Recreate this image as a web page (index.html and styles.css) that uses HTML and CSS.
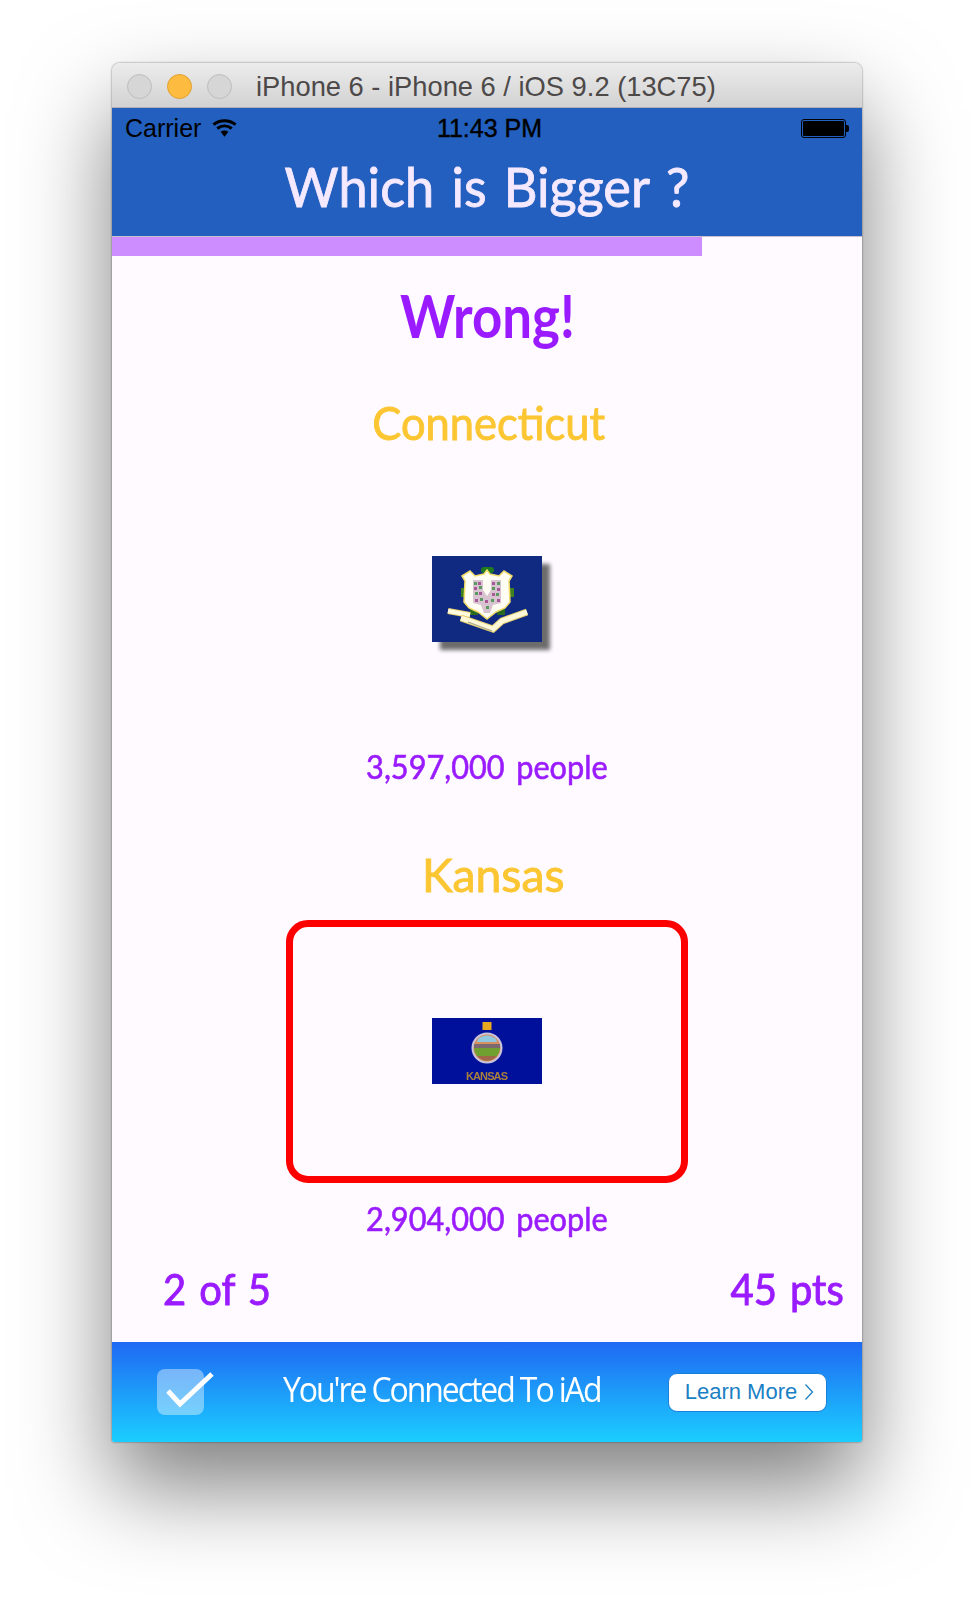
FILE: index.html
```html
<!DOCTYPE html>
<html lang="en">
<head>
<meta charset="utf-8">
<title>Which is Bigger</title>
<link rel="stylesheet" href="styles.css">
</head>
<body>
<div class="window">
  <div class="titlebar">
    <div class="lights"><span class="light"></span><span class="light amber"></span><span class="light"></span></div>
    <div class="wintitle">iPhone 6 - iPhone 6 / iOS 9.2 (13C75)</div>
  </div>
  <header class="appbar">
    <div class="status">
      <div class="status-left">
        <span>Carrier</span>
        <svg class="wifi" viewBox="0 0 26 20"><path d="M1.500 6.500C8 1 18 1 24.500 6.500" fill="none" stroke="#000" stroke-width="3.200"/><path d="M5.500 10.500C10 7 16 7 20.500 10.500" fill="none" stroke="#000" stroke-width="3.200"/><path d="M9 14C11.500 12 14.500 12 17 14L13 19Z" fill="#000"/></svg>
      </div>
      <div class="clock">11:43 PM</div>
      <div class="battery"><span class="cell"></span><span class="nub"></span></div>
    </div>
    <h1 class="apptitle">Which is Bigger ?</h1>
  </header>
  <div class="progress"><div class="progress-fill"></div></div>
  <main class="game">
    <div class="verdict">Wrong!</div>
    <div class="state-name first">Connecticut</div>
    <div class="flag-slot ct">
      <svg class="flag flag-shadow" viewBox="0 0 110 86">
        <rect width="110" height="86" fill="#0f2a80"/>
        <g class="soft">
          <rect x="49" y="11" width="13" height="6" rx="3" fill="#1f7a20"/>
          <rect x="29" y="32" width="5" height="9" fill="#3f8020"/>
          <rect x="77" y="32" width="5" height="9" fill="#3f8020"/>
          <rect x="38" y="53" width="8" height="6" fill="#2a6a20"/>
          <rect x="65" y="53" width="8" height="6" fill="#2a6a20"/>
          <path d="M30 20l8-5 5 5 9-2 3-4 3 4 9 2 5-5 8 5-3 5 1 21-5 6-9 4-9 7-9-7-9-4-5-6 1-21z" fill="#fffef4" stroke="#f2dc6a" stroke-width="1.500"/>
          <path d="M41 24h10v10l4 6 4-6V24h10v23l-8 2-3 8h-6l-3-8-8-2z" fill="#d8c4d0"/>
          <path d="M42 26h3v3h-3zM47 30h3v3h-3zM43 36h3v3h-3zM65 26h3v3h-3zM60 31h3v3h-3zM64 37h3v3h-3zM48 42h3v3h-3zM59 43h3v3h-3zM54 50h3v3h-3z" fill="#5a9a60"/>
          <path d="M46 26h3v3h-3zM42 31h3v3h-3zM47 36h3v3h-3zM60 26h3v3h-3zM65 32h3v3h-3zM60 37h3v3h-3zM53 44h3v3h-3zM43 43h3v3h-3zM65 43h3v3h-3z" fill="#a85a98"/>
          <path d="M16 55l22 4" fill="none" stroke="#e8d070" stroke-width="6"/>
          <path d="M16 55l22 4" fill="none" stroke="#fffbe0" stroke-width="4"/>
          <path d="M29 62l32 11 9-8 25-9" fill="none" stroke="#e8d070" stroke-width="7"/>
          <path d="M29 62l32 11 9-8 25-9" fill="none" stroke="#fff8d8" stroke-width="5"/>
          <path d="M36 66l24 9" fill="none" stroke="#a8a488" stroke-width="1.200"/>
        </g>
      </svg>
    </div>
    <div class="people">3,597,000 <span class="unit">people</span></div>
    <div class="state-name second">Kansas</div>
    <div class="flag-box">
      <svg class="flag" viewBox="0 0 110 66">
        <rect width="110" height="66" fill="#00109a"/>
        <g class="soft">
          <rect x="50.500" y="4" width="9" height="8" fill="#e8a820"/>
          <circle cx="55" cy="30" r="15.500" fill="#c8c4dc"/>
          <circle cx="55" cy="30" r="13.500" fill="#d89060"/>
          <path d="M46 21a13 13 0 0 1 18 0l1 3H45z" fill="#90c8e0"/>
          <rect x="42" y="26" width="26" height="4" fill="#7a6a70"/>
          <path d="M42 30h26a13.500 13.500 0 0 1-3 8H45a13.500 13.500 0 0 1-3-8z" fill="#6fa030"/>
          <path d="M45 38h20a13 13 0 0 1-20 0z" fill="#a06848"/>
        </g>
        <text class="flag-label" x="55" y="62" text-anchor="middle" textLength="42">KANSAS</text>
      </svg>
    </div>
    <div class="people lower">2,904,000 <span class="unit">people</span></div>
    <div class="score-row"><span class="score-left">2 of 5</span><span class="score-right">45 pts</span></div>
  </main>
  <footer class="ad">
    <div class="ad-check">
      <span class="ad-square"></span>
      <svg class="ad-tick" viewBox="0 0 60 46"><path d="M11 22l12 13L55 5" fill="none" stroke="#fff" stroke-width="5"/></svg>
    </div>
    <div class="ad-text">You're Connected To iAd</div>
    <div class="ad-button">Learn More
      <svg class="chev" viewBox="0 0 10 18"><path d="M1.500 1.500L8.500 9l-7 7.500" fill="none" stroke="#1a7fc4" stroke-width="1.300"/></svg>
    </div>
  </footer>
</div>
</body>
</html>
```
FILE: styles.css
```css
* { box-sizing: border-box; }
html, body { margin: 0; padding: 0; background: #fff; }
body {
  width: 974px;
  height: 1602px;
  padding: 63px 112px 0 112px;
  overflow: hidden;
}
.window {
  width: 750px;
  height: 1379px;
  display: flex;
  flex-direction: column;
  border-radius: 8px 8px 2px 2px;
  box-shadow: 0 0 2px rgba(0,0,0,.6), 0 45px 90px rgba(0,0,0,.5);
}
.titlebar {
  height: 45px;
  flex: none;
  display: flex;
  align-items: center;
  padding: 2px 0 0 15px;
  border-radius: 8px 8px 0 0;
  background: linear-gradient(#ececec, #d2d2d2);
  border-bottom: 1px solid #b0b0b0;
}
.lights { display: flex; gap: 15px; }
.light {
  width: 25px; height: 25px; border-radius: 50%;
  background: #d6d6d6; border: 1px solid #bdbdbd;
}
.light.amber { background: #fdbc40; border-color: #e0a030; }
.wintitle {
  margin-left: 24px;
  padding-top: 2px;
  font: 27.300px "Liberation Sans", Arial, sans-serif;
  color: #4d4949;
  white-space: nowrap;
}
.appbar { flex: none; height: 128px; background: #225fbe; }
.status {
  height: 40px;
  padding: 0 13px 0 13px;
  display: grid;
  grid-template-columns: 1fr auto 1fr;
  align-items: center;
  font: 25px "Liberation Sans", Arial, sans-serif;
  color: #000;
}
.status-left { display: flex; align-items: center; gap: 11px; }
.wifi { width: 25px; height: 20px; }
.clock { padding-left: 5px; font-weight: 500; -webkit-text-stroke: .4px #000; }
.battery { justify-self: end; display: flex; align-items: center; }
.cell {
  width: 45px; height: 19px; padding: 1px;
  background: #000; background-clip: content-box;
  border: 1px solid #000; border-radius: 3px;
}
.nub { width: 3px; height: 7px; background: #000; border-radius: 0 2px 2px 0; }
.apptitle {
  margin: 0;
  text-align: center;
  font: 400 55px/76px Lato, sans-serif;
  color: #f5e9ff;
  -webkit-text-stroke: .9px #f5e9ff;
  word-spacing: 4px;
  transform: scaleX(.95);
}
.progress { flex: none; height: 20px; background: #fefaff; border-top: 1px solid #c8c0d0; }
.progress-fill { width: 590px; height: 19px; background: #cd8dff; }
.game {
  flex: 1;
  display: flex;
  flex-direction: column;
  align-items: center;
  background: #fefaff;
  color: #9a1bff;
  font-family: Lato, sans-serif;
}
.verdict {
  margin-top: 24px;
  font: 700 60px/70px Lato, sans-serif;
  transform: scaleX(.88);
}
.state-name {
  color: #fcc633;
  font: 400 47px/56px Lato, sans-serif;
  -webkit-text-stroke: .9px #fcc633;
  transform: scaleX(.925);
}
.state-name.first { margin-top: 44px; padding-left: 4px; }
.flag-slot { margin-top: 106px; height: 86px; }
.flag { display: block; width: 110px; }
.flag-shadow { height: 86px; filter: drop-shadow(8px 8px 2px rgba(60,60,60,.75)); }
.soft { filter: blur(.7px); }
.flag-label { font: 700 11px "Liberation Sans", sans-serif; fill: #a8803c; filter: blur(.4px); }
.people {
  font: 400 33px/40px Lato, sans-serif;
  -webkit-text-stroke: .6px #9a1bff;
  word-spacing: 4px;
  margin-top: 104px;
  transform: scaleX(.93);
}
.people.lower { margin-top: 15px; }
.state-name.second { margin-top: 60px; padding-left: 13px; transform: scaleX(.985); }
.flag-box {
  margin-top: 18px;
  width: 402px;
  height: 263px;
  padding-bottom: 2px;
  border: 7px solid #ff0000;
  border-radius: 22px;
  display: flex;
  align-items: center;
  justify-content: center;
}
.score-row {
  align-self: stretch;
  display: flex;
  justify-content: space-between;
  padding: 24px 18px 0 51px;
  font: 400 43px/54px Lato, sans-serif;
  -webkit-text-stroke: .9px #9a1bff;
  word-spacing: 3px;
}
.score-left { transform: scaleX(.93); transform-origin: left center; }
.score-right { transform: scaleX(.93); transform-origin: right center; }
.ad {
  flex: none;
  height: 100px;
  display: flex;
  align-items: center;
  background: linear-gradient(#1f69f3, #1bceff);
  color: #fff;
  border-radius: 0 0 2px 2px;
}
.ad-check { position: relative; width: 60px; height: 46px; margin: 0 0 0 45px; }
.ad-square { position: absolute; left: 0; top: 0; width: 47px; height: 46px; border-radius: 8px; background: rgba(255,255,255,.4); }
.ad-tick { position: absolute; left: 0; top: 0; width: 60px; height: 46px; }
.ad-text {
  margin: 0 0 7px 66px;
  width: 385px;
  font: 34px "Open Sans", sans-serif;
  letter-spacing: -2.200px;
  transform: scaleX(.94);
  transform-origin: left center;
  white-space: nowrap;
}
.ad-button {
  width: 159px;
  height: 39px;
  padding-left: 4px;
  border-radius: 9px;
  background: #fff;
  border: 1px solid #1a7fd8;
  display: flex;
  align-items: center;
  justify-content: center;
  gap: 7px;
  color: #1a7fc4;
  font: 22px "Liberation Sans", Arial, sans-serif;
}
.chev { width: 10px; height: 18px; }
```
